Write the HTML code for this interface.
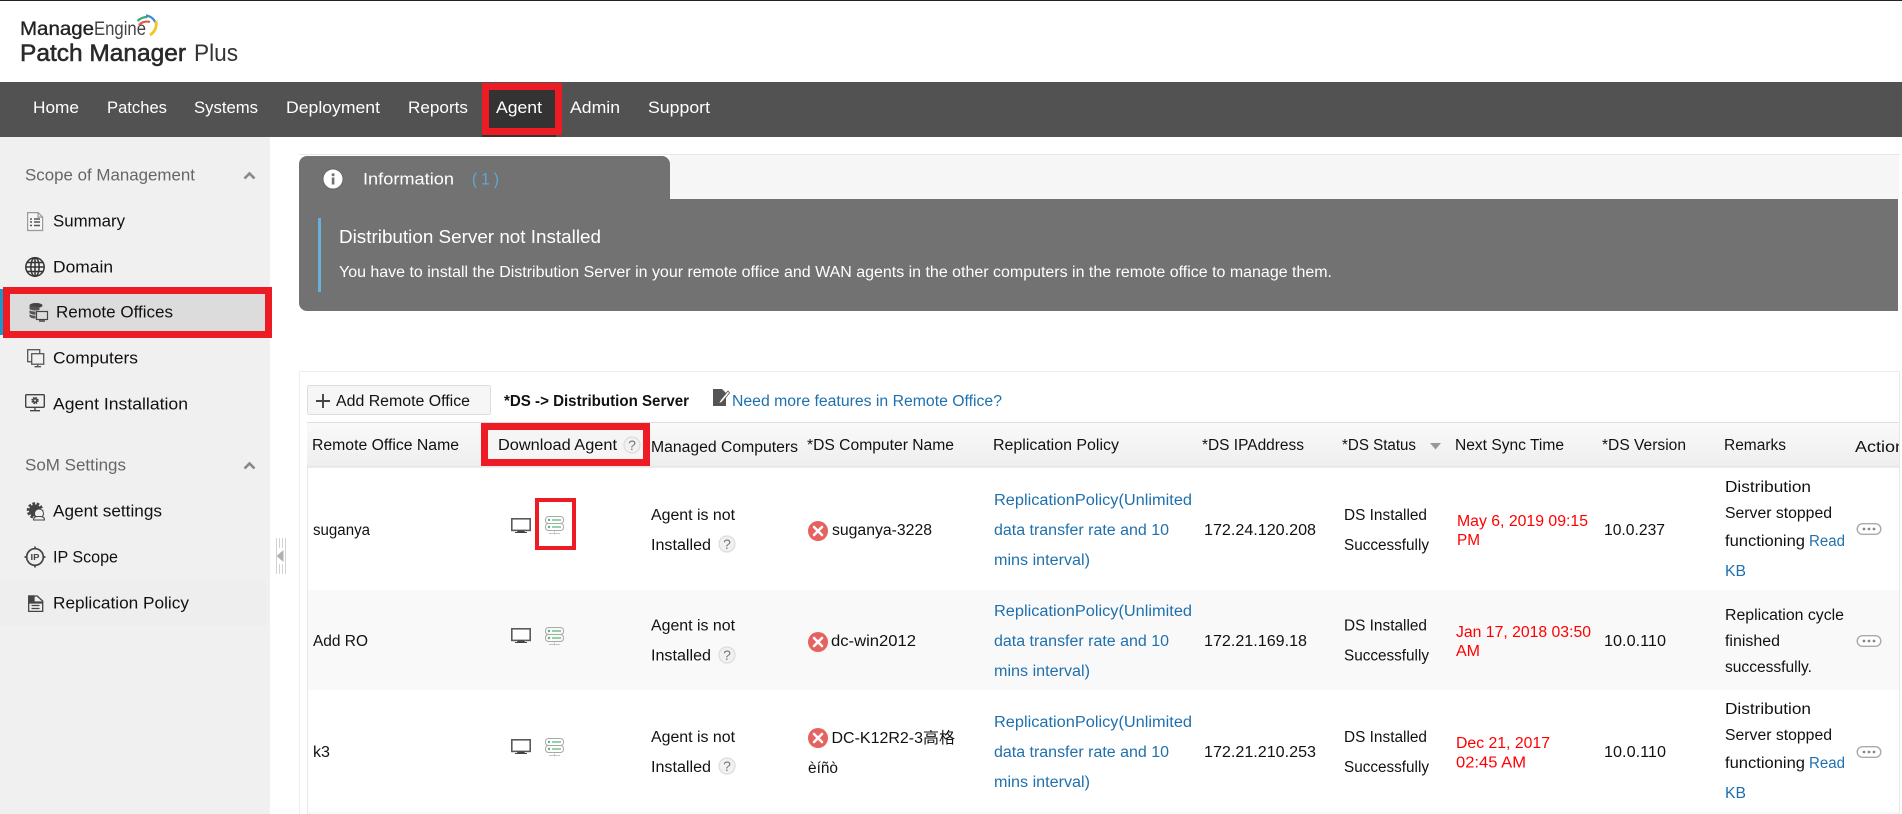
<!DOCTYPE html>
<html lang="en">
<head>
<meta charset="utf-8">
<title>Patch Manager Plus - Remote Offices</title>
<style>
html,body{margin:0;padding:0;background:#fff;width:1902px;height:814px;overflow:hidden}
svg{display:block}
text{font-family:"Liberation Sans","Noto Sans CJK SC",sans-serif;font-size:15.5px;fill:#111;white-space:pre}
.nav{font-size:17px;fill:#fff}
.side{font-size:16.5px;fill:#111}
.sh{font-size:16.5px;fill:#666}
.lk{fill:#1f70ad}
.rd{fill:#f00}
.q{font-size:14px;fill:#777;text-anchor:middle}
</style>
</head>
<body>
<svg xmlns="http://www.w3.org/2000/svg" width="1902" height="814" viewBox="0 0 1902 814">
<defs>
<g id="mon" fill="none">
  <rect x="0.8" y="0.8" width="18.4" height="11.6" fill="#fff" stroke="#5a5a5a" stroke-width="1.6"/>
  <path d="M7 12.500h6l1 1.500h2v1H4v-1h2z" fill="#444"/>
</g>
<g id="ds" fill="none" opacity=".85">
  <rect x="0.5" y="0.500" width="18" height="7" rx="3" stroke="#999"/>
  <rect x="0.5" y="7.500" width="18" height="7" rx="3" stroke="#999"/>
  <circle cx="4" cy="4" r="1.2" fill="#3ea860"/>
  <circle cx="4" cy="11" r="1.2" fill="#3ea860"/>
  <path d="M7 4h9M7 11h9" stroke="#3ea860" stroke-width="1.3"/>
  <path d="M4 17.500h11M9.500 15.500v3" stroke="#bbb"/>
</g>
<g id="help">
  <circle r="8" fill="#f1f1f1" stroke="#dcdcdc" stroke-width="1.2"/>
</g>
<g id="err">
  <circle r="10" fill="#e5625f"/>
  <path d="M-4-4 4 4M4-4-4 4" stroke="#fff" stroke-width="2.6" stroke-linecap="round"/>
</g>
<g id="dots">
  <rect x="0.7" y="0.7" width="23.6" height="10.6" rx="5.3" fill="#fff" stroke="#aaa" stroke-width="1.4"/>
  <circle cx="7.5" cy="6" r="1.4" fill="#888"/><circle cx="12.5" cy="6" r="1.4" fill="#888"/><circle cx="17.5" cy="6" r="1.4" fill="#888"/>
</g>
</defs>

<!-- top bar & logo -->
<rect width="1902" height="814" fill="#fff"/>
<rect width="1902" height="1" fill="#222"/>
<text x="20" y="35" textLength="74" lengthAdjust="spacingAndGlyphs" style="font-size:19.500px;fill:#222;stroke:#222;stroke-width:.35">Manage</text>
<text x="94" y="35" textLength="52" lengthAdjust="spacingAndGlyphs" style="font-size:19.500px;fill:#444">Engine</text>
<g fill="none" stroke-width="2.2">
  <path d="M139 25a11 11 0 0 1 11-3" stroke="#e0584f"/>
  <path d="M137.500 21a14 14 0 0 1 10-4" stroke="#3dab6b"/>
  <path d="M146 15.500a12 12 0 0 1 9.500 7" stroke="#2f8fcf"/>
  <path d="M156 21a13 13 0 0 1-6 14" stroke="#f2c522" stroke-width="2.800"/>
</g>
<text x="20" y="61" textLength="166" lengthAdjust="spacingAndGlyphs" style="font-size:24px;fill:#2a2a2a;stroke:#2a2a2a;stroke-width:.55">Patch Manager</text>
<text x="194" y="61" textLength="44" lengthAdjust="spacingAndGlyphs" style="font-size:24px;fill:#333">Plus</text>

<!-- nav -->
<rect y="82" width="1902" height="55" fill="#525252"/>
<rect x="482" y="83" width="74" height="54" fill="#333"/>
<rect x="485.500" y="86.500" width="73" height="45" fill="#333" stroke="#ed1c24" stroke-width="7"/>
<text class="nav" x="33" y="113" textLength="46" lengthAdjust="spacingAndGlyphs">Home</text>
<text class="nav" x="107" y="113" textLength="60" lengthAdjust="spacingAndGlyphs">Patches</text>
<text class="nav" x="194" y="113" textLength="64" lengthAdjust="spacingAndGlyphs">Systems</text>
<text class="nav" x="286" y="113" textLength="94" lengthAdjust="spacingAndGlyphs">Deployment</text>
<text class="nav" x="408" y="113" textLength="60" lengthAdjust="spacingAndGlyphs">Reports</text>
<text class="nav" x="496" y="113" textLength="46" lengthAdjust="spacingAndGlyphs">Agent</text>
<text class="nav" x="570" y="113" textLength="50" lengthAdjust="spacingAndGlyphs">Admin</text>
<text class="nav" x="648" y="113" textLength="62" lengthAdjust="spacingAndGlyphs">Support</text>

<!-- sidebar -->
<rect y="137" width="270" height="677" fill="#f0f0f0"/>
<rect y="580" width="266" height="46" fill="#eeeeee"/>
<rect y="289" width="3" height="46" fill="#1a98cc"/>
<rect x="6.500" y="290.500" width="262" height="44" fill="#dcdcdc" stroke="#ed1c24" stroke-width="7"/>

<text class="sh" x="25" y="180.500" textLength="170" lengthAdjust="spacingAndGlyphs">Scope of Management</text>
<path d="M244.500 178.500l5-5 5 5" fill="none" stroke="#888" stroke-width="2.6"/>
<text class="side" x="53" y="226.500" textLength="72" lengthAdjust="spacingAndGlyphs">Summary</text>
<text class="side" x="53" y="272.500" textLength="60" lengthAdjust="spacingAndGlyphs">Domain</text>
<text class="side" x="56" y="317.500" textLength="117" lengthAdjust="spacingAndGlyphs">Remote Offices</text>
<text class="side" x="53" y="363.500" textLength="85" lengthAdjust="spacingAndGlyphs">Computers</text>
<text class="side" x="53" y="409.500" textLength="135" lengthAdjust="spacingAndGlyphs">Agent Installation</text>
<text class="sh" x="25" y="470.500" textLength="101" lengthAdjust="spacingAndGlyphs">SoM Settings</text>
<path d="M244.500 468.500l5-5 5 5" fill="none" stroke="#888" stroke-width="2.6"/>
<text class="side" x="53" y="516.500" textLength="109" lengthAdjust="spacingAndGlyphs">Agent settings</text>
<text class="side" x="53" y="562.500" textLength="65" lengthAdjust="spacingAndGlyphs">IP Scope</text>
<text class="side" x="53" y="608.500" textLength="136" lengthAdjust="spacingAndGlyphs">Replication Policy</text>

<!-- sidebar icons -->
<g fill="none" stroke="#666" stroke-width="1.2">
  <path d="M27.600 212.600h10.500l4.500 4.500v13.400h-15z" fill="#f6f6f6" stroke="#999"/>
  <path d="M38 212.600v4.500h4.500" stroke="#999"/>
  <path d="M30 219h2M30 222h2M30 225.500h2M34 219h6M34 222h6M34 225.500h6" stroke="#555" stroke-width="1.5"/>
</g>
<g fill="none" stroke="#333" stroke-width="1.5">
  <circle cx="35" cy="267" r="9.200"/>
  <ellipse cx="35" cy="267" rx="4.200" ry="9.200"/>
  <path d="M35 258v18M26 267h18M27 262.500h16M27 271.500h16"/>
</g>
<g>
  <ellipse cx="36" cy="305.500" rx="6.500" ry="2.500" fill="#444"/>
  <path d="M29.500 306v10c0 1.500 3 2.500 6 2.500V311h4v-4z" fill="#555"/>
  <path d="M29.500 309.500c2 2 9 2 13 0M29.500 313.500c1.500 1.300 3.500 1.800 6 1.800" stroke="#dcdcdc" fill="none"/>
  <rect x="36.500" y="311.500" width="11" height="8" fill="#dcdcdc" stroke="#444" stroke-width="1.200"/>
  <path d="M39 321h6" stroke="#444" stroke-width="1.500"/>
</g>
<g fill="none" stroke="#555" stroke-width="1.300">
  <rect x="27.700" y="349.700" width="12" height="12"/>
  <rect x="31.700" y="353.700" width="12" height="10.500" fill="#f0f0f0"/>
  <path d="M37.700 364.500v2M34.500 366.700h6.500"/>
</g>
<g>
  <rect x="25.700" y="394.700" width="18.600" height="12.600" rx="1" fill="none" stroke="#444" stroke-width="1.400"/>
  <circle cx="35" cy="400.500" r="2.800" fill="none" stroke="#444" stroke-width="1.800" stroke-dasharray="1.400 .8"/>
  <circle cx="35" cy="400.500" r="2.600" fill="#444"/><circle cx="35" cy="400.500" r="1" fill="#f0f0f0"/>
  <path d="M35 407.500v3M30 410.700h10" stroke="#444" stroke-width="1.400"/>
</g>
<g>
  <circle cx="35" cy="510.500" r="6.500" fill="none" stroke="#444" stroke-width="3.500" stroke-dasharray="2.500 1.500"/>
  <circle cx="35" cy="510.500" r="6" fill="#444"/>
  <circle cx="39" cy="513.500" r="4.500" fill="#f0f0f0" stroke="#444"/>
  <path d="M33.500 520c0-3 2-3.500 5.500-3.500s5.500.5 5.500 3.500z" fill="#f0f0f0" stroke="#444"/>
</g>
<g fill="none" stroke="#444" stroke-width="1.700">
  <circle cx="35" cy="557" r="8.300"/>
  <path d="M35 546.500v3M35 564.500v3M24.500 557h3M42.500 557h3"/>
</g>
<text x="30.500" y="560" textLength="9" lengthAdjust="spacingAndGlyphs" style="font-size:8.500px;font-weight:bold;fill:#444">IP</text>
<g fill="none" stroke="#444" stroke-width="1.300">
  <path d="M28.700 596h8.500l5.500 5v10.400h-14z"/>
  <path d="M29 596h5v6h8v1H29z" fill="#444"/>
  <path d="M31.500 605.500h8M31.500 608.500h8"/>
</g>
<!-- splitter -->
<g stroke="#d2d2d2" stroke-width="1">
  <path d="M276.500 538v36M279.500 538v10M279.500 564v10M282.500 538v10M282.500 564v10M285.500 538v36"/>
</g>
<path d="M283.500 550v12l-7-6z" fill="#b0b0b0"/>

<!-- information panel -->
<rect x="299" y="154" width="1603" height="1" fill="#e8e8e8"/>
<rect x="670" y="155" width="1229" height="44" fill="#f6f6f6"/>
<path d="M299 164a8 8 0 0 1 8-8h355a8 8 0 0 1 8 8v35h1228v112H307a8 8 0 0 1-8-8z" fill="#727272"/>
<circle cx="333" cy="179" r="10" fill="#fff" stroke="#666" stroke-width="1"/>
<rect x="331.800" y="177.500" width="2.600" height="7" fill="#727272"/>
<circle cx="333.100" cy="174.800" r="1.500" fill="#727272"/>
<text x="363" y="184.500" textLength="91" lengthAdjust="spacingAndGlyphs" style="font-size:16.500px;fill:#fff">Information</text>
<text x="472" y="184.500" textLength="27" lengthAdjust="spacingAndGlyphs" style="font-size:16.500px;fill:#5ea9d8">( 1 )</text>
<rect x="318" y="218" width="3" height="74" fill="#68b0da"/>
<text x="339" y="243" textLength="262" lengthAdjust="spacingAndGlyphs" style="font-size:18px;fill:#fff">Distribution Server not Installed</text>
<text x="339" y="277" textLength="993" lengthAdjust="spacingAndGlyphs" style="fill:#fff">You have to install the Distribution Server in your remote office and WAN agents in the other computers in the remote office to manage them.</text>

<!-- table section -->
<rect x="299" y="371" width="1603" height="1" fill="#eeeeee"/>
<rect x="299" y="371" width="1" height="443" fill="#eeeeee"/>
<rect x="1899" y="371" width="1" height="443" fill="#e8e8e8"/>
<rect x="307" y="422" width="1" height="392" fill="#e8e8e8"/>

<rect x="307.500" y="385.500" width="183" height="29" rx="2" fill="#f6f6f6" stroke="#dddddd"/>
<path d="M323 394v14M316 401h14" stroke="#444" stroke-width="1.900"/>
<text x="336" y="406" textLength="134" lengthAdjust="spacingAndGlyphs">Add Remote Office</text>
<text x="504" y="406" textLength="185" lengthAdjust="spacingAndGlyphs" style="font-weight:bold">*DS -&gt; Distribution Server</text>
<g>
  <path d="M713 389h9l4 4v13h-13z" fill="#555"/>
  <path d="M728 391l-7.500 9-2 4 3.500-2 7.500-9z" fill="#fff" stroke="#555" stroke-width=".8"/>
</g>
<text class="lk" x="732" y="406" textLength="270" lengthAdjust="spacingAndGlyphs">Need more features in Remote Office?</text>

<!-- header -->
<linearGradient id="hg" x1="0" y1="0" x2="0" y2="1"><stop offset="0" stop-color="#fafafa"/><stop offset="1" stop-color="#eeeeee"/></linearGradient>
<rect x="307" y="422" width="1592" height="45" fill="url(#hg)"/>
<rect x="307" y="422" width="1592" height="1" fill="#dedede"/>
<rect x="307" y="466.500" width="1592" height="1" fill="#dedede"/>
<rect x="484.500" y="426.500" width="162" height="36" fill="#f5f5f5" stroke="#ed1c24" stroke-width="7"/>
<text x="312" y="450" textLength="147" lengthAdjust="spacingAndGlyphs">Remote Office Name</text>
<text x="498" y="450" textLength="119" lengthAdjust="spacingAndGlyphs">Download Agent</text>
<use href="#help" x="632" y="445"/><text class="q" x="632" y="450">?</text>
<text x="651" y="452" textLength="147" lengthAdjust="spacingAndGlyphs">Managed Computers</text>
<text x="807" y="450" textLength="147" lengthAdjust="spacingAndGlyphs">*DS Computer Name</text>
<text x="993" y="450" textLength="126" lengthAdjust="spacingAndGlyphs">Replication Policy</text>
<text x="1202" y="450" textLength="102" lengthAdjust="spacingAndGlyphs">*DS IPAddress</text>
<text x="1342" y="450" textLength="74" lengthAdjust="spacingAndGlyphs">*DS Status</text>
<path d="M1430 443h11l-5.500 6.500z" fill="#999"/>
<text x="1455" y="450" textLength="109" lengthAdjust="spacingAndGlyphs">Next Sync Time</text>
<text x="1602" y="450" textLength="84" lengthAdjust="spacingAndGlyphs">*DS Version</text>
<text x="1724" y="450" textLength="62" lengthAdjust="spacingAndGlyphs">Remarks</text>
<text x="1855" y="452" textLength="50" lengthAdjust="spacingAndGlyphs">Action</text>

<!-- rows bg -->
<rect x="308" y="590" width="1591" height="100" fill="#f9f9f9"/>
<rect x="308" y="812" width="1591" height="2" fill="#f9f9f9"/>

<!-- row 1 -->
<text x="313" y="535" textLength="57" lengthAdjust="spacingAndGlyphs">suganya</text>
<use href="#mon" x="511" y="518"/>
<rect x="537" y="500" width="37" height="48" fill="#fff" stroke="#ed1c24" stroke-width="4"/>
<use href="#ds" x="545" y="516"/>
<text x="651" y="520" textLength="84" lengthAdjust="spacingAndGlyphs">Agent is not</text>
<text x="651" y="550" textLength="60" lengthAdjust="spacingAndGlyphs">Installed</text>
<use href="#help" x="727" y="544"/><text class="q" x="727" y="549">?</text>
<use href="#err" x="818" y="531"/>
<text x="832" y="535" textLength="100" lengthAdjust="spacingAndGlyphs">suganya-3228</text>
<text class="lk" x="994" y="505" textLength="198" lengthAdjust="spacingAndGlyphs">ReplicationPolicy(Unlimited</text>
<text class="lk" x="994" y="535" textLength="175" lengthAdjust="spacingAndGlyphs">data transfer rate and 10</text>
<text class="lk" x="994" y="565" textLength="96" lengthAdjust="spacingAndGlyphs">mins interval)</text>
<text x="1204" y="535" textLength="112" lengthAdjust="spacingAndGlyphs">172.24.120.208</text>
<text x="1344" y="520" textLength="83" lengthAdjust="spacingAndGlyphs">DS Installed</text>
<text x="1344" y="550" textLength="85" lengthAdjust="spacingAndGlyphs">Successfully</text>
<text class="rd" x="1457" y="526" textLength="131" lengthAdjust="spacingAndGlyphs">May 6, 2019 09:15</text>
<text class="rd" x="1457" y="545" textLength="23" lengthAdjust="spacingAndGlyphs">PM</text>
<text x="1604" y="535" textLength="61" lengthAdjust="spacingAndGlyphs">10.0.237</text>
<text x="1725" y="492" textLength="86" lengthAdjust="spacingAndGlyphs">Distribution</text>
<text x="1725" y="518" textLength="107" lengthAdjust="spacingAndGlyphs">Server stopped</text>
<text x="1725" y="546" textLength="80" lengthAdjust="spacingAndGlyphs">functioning</text>
<text class="lk" x="1809" y="546" textLength="36" lengthAdjust="spacingAndGlyphs">Read</text>
<text class="lk" x="1725" y="576" textLength="21" lengthAdjust="spacingAndGlyphs">KB</text>
<use href="#dots" x="1856.500" y="523"/>

<!-- row 2 -->
<text x="313" y="646" textLength="55" lengthAdjust="spacingAndGlyphs">Add RO</text>
<use href="#mon" x="511" y="628"/>
<use href="#ds" x="545" y="627"/>
<text x="651" y="630.500" textLength="84" lengthAdjust="spacingAndGlyphs">Agent is not</text>
<text x="651" y="660.500" textLength="60" lengthAdjust="spacingAndGlyphs">Installed</text>
<use href="#help" x="727" y="655"/><text class="q" x="727" y="660">?</text>
<use href="#err" x="818" y="642"/>
<text x="831" y="646" textLength="85" lengthAdjust="spacingAndGlyphs">dc-win2012</text>
<text class="lk" x="994" y="616" textLength="198" lengthAdjust="spacingAndGlyphs">ReplicationPolicy(Unlimited</text>
<text class="lk" x="994" y="646" textLength="175" lengthAdjust="spacingAndGlyphs">data transfer rate and 10</text>
<text class="lk" x="994" y="676" textLength="96" lengthAdjust="spacingAndGlyphs">mins interval)</text>
<text x="1204" y="646" textLength="103" lengthAdjust="spacingAndGlyphs">172.21.169.18</text>
<text x="1344" y="630.500" textLength="83" lengthAdjust="spacingAndGlyphs">DS Installed</text>
<text x="1344" y="660.500" textLength="85" lengthAdjust="spacingAndGlyphs">Successfully</text>
<text class="rd" x="1456" y="637" textLength="135" lengthAdjust="spacingAndGlyphs">Jan 17, 2018 03:50</text>
<text class="rd" x="1456" y="656" textLength="24" lengthAdjust="spacingAndGlyphs">AM</text>
<text x="1604" y="646" textLength="62" lengthAdjust="spacingAndGlyphs">10.0.110</text>
<text x="1725" y="620" textLength="119" lengthAdjust="spacingAndGlyphs">Replication cycle</text>
<text x="1725" y="646" textLength="55" lengthAdjust="spacingAndGlyphs">finished</text>
<text x="1725" y="672" textLength="87" lengthAdjust="spacingAndGlyphs">successfully.</text>
<use href="#dots" x="1856.500" y="635"/>

<!-- row 3 -->
<text x="313" y="757" textLength="17" lengthAdjust="spacingAndGlyphs">k3</text>
<use href="#mon" x="511" y="739"/>
<use href="#ds" x="545" y="738"/>
<text x="651" y="742" textLength="84" lengthAdjust="spacingAndGlyphs">Agent is not</text>
<text x="651" y="772" textLength="60" lengthAdjust="spacingAndGlyphs">Installed</text>
<use href="#help" x="727" y="766"/><text class="q" x="727" y="771">?</text>
<use href="#err" x="818" y="738"/>
<text x="831.500" y="743" textLength="123.500" lengthAdjust="spacingAndGlyphs">DC-K12R2-3高格</text>
<text x="808" y="773" textLength="30" lengthAdjust="spacingAndGlyphs">èíñò</text>
<text class="lk" x="994" y="727" textLength="198" lengthAdjust="spacingAndGlyphs">ReplicationPolicy(Unlimited</text>
<text class="lk" x="994" y="757" textLength="175" lengthAdjust="spacingAndGlyphs">data transfer rate and 10</text>
<text class="lk" x="994" y="787" textLength="96" lengthAdjust="spacingAndGlyphs">mins interval)</text>
<text x="1204" y="757" textLength="112" lengthAdjust="spacingAndGlyphs">172.21.210.253</text>
<text x="1344" y="742" textLength="83" lengthAdjust="spacingAndGlyphs">DS Installed</text>
<text x="1344" y="772" textLength="85" lengthAdjust="spacingAndGlyphs">Successfully</text>
<text class="rd" x="1456" y="748" textLength="94" lengthAdjust="spacingAndGlyphs">Dec 21, 2017</text>
<text class="rd" x="1456" y="767.500" textLength="70" lengthAdjust="spacingAndGlyphs">02:45 AM</text>
<text x="1604" y="757" textLength="62" lengthAdjust="spacingAndGlyphs">10.0.110</text>
<text x="1725" y="714" textLength="86" lengthAdjust="spacingAndGlyphs">Distribution</text>
<text x="1725" y="740" textLength="107" lengthAdjust="spacingAndGlyphs">Server stopped</text>
<text x="1725" y="768" textLength="80" lengthAdjust="spacingAndGlyphs">functioning</text>
<text class="lk" x="1809" y="768" textLength="36" lengthAdjust="spacingAndGlyphs">Read</text>
<text class="lk" x="1725" y="798" textLength="21" lengthAdjust="spacingAndGlyphs">KB</text>
<use href="#dots" x="1856.500" y="746"/>

<!-- right clip -->
<rect x="1900" y="0" width="2" height="814" fill="#fff"/>
<rect x="1899" y="422" width="1" height="45" fill="#e8e8e8"/>
<rect x="1900" y="0" width="2" height="1" fill="#222"/>
<rect x="1900" y="82" width="2" height="55" fill="#525252"/>
</svg>
</body>
</html>
